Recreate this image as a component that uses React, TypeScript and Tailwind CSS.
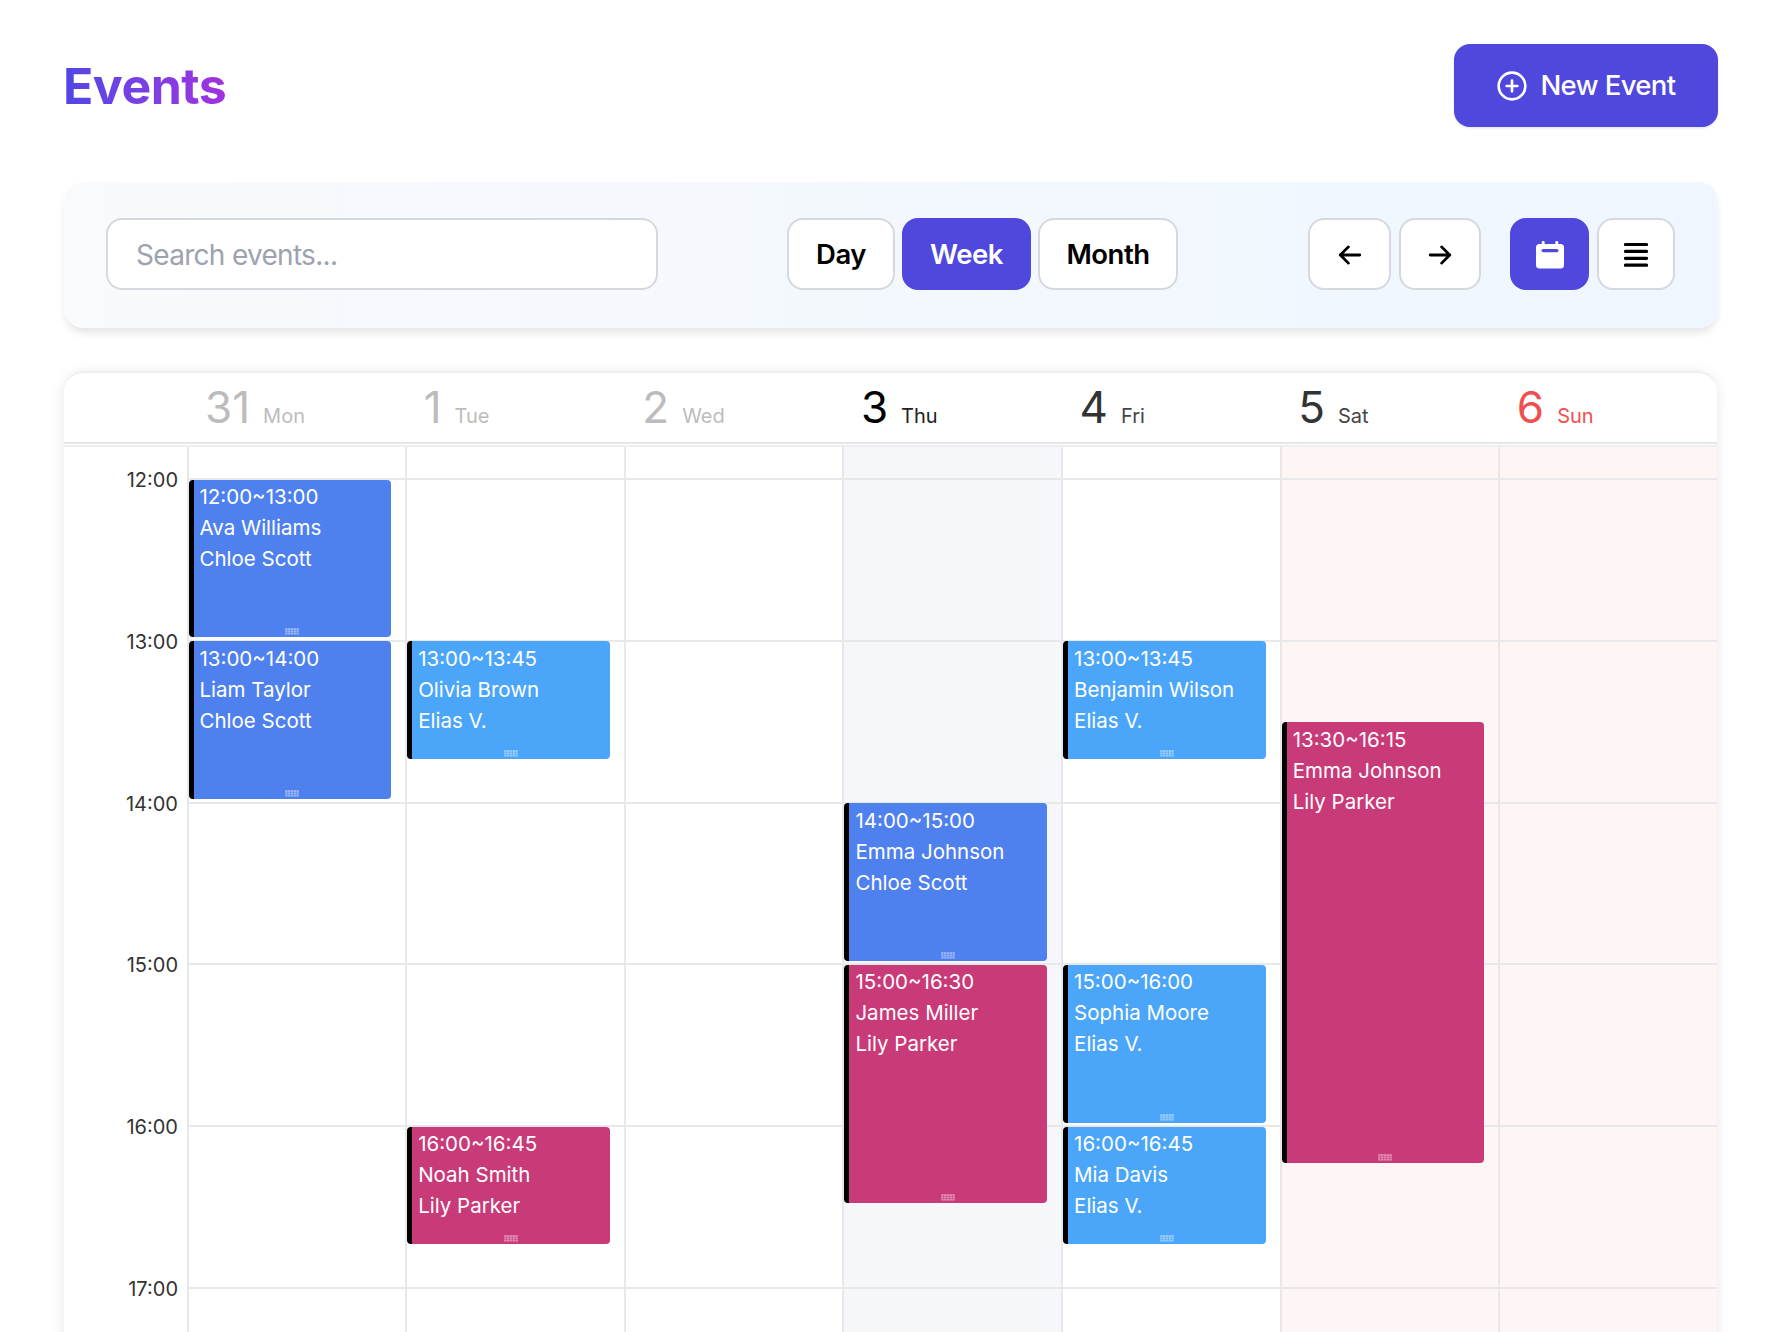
import { CirclePlus } from "lucide-react";

type EventItem = {
  col: number;
  start: number;
  end: number;
  time: string;
  name: string;
  owner: string;
  color: string;
};

const HOUR = 161.75;

const days = [
  { num: "31", label: "Mon", numClass: "text-[#bcbcbc]", labelClass: "text-[#bcbcbc]", bg: "" },
  { num: "1", label: "Tue", numClass: "text-[#bcbcbc]", labelClass: "text-[#bcbcbc]", bg: "" },
  { num: "2", label: "Wed", numClass: "text-[#bcbcbc]", labelClass: "text-[#bcbcbc]", bg: "" },
  { num: "3", label: "Thu", numClass: "text-black", labelClass: "text-[#222222]", bg: "bg-[#f5f7fb]" },
  { num: "4", label: "Fri", numClass: "text-[#333333]", labelClass: "text-[#444444]", bg: "" },
  { num: "5", label: "Sat", numClass: "text-[#333333]", labelClass: "text-[#444444]", bg: "bg-[#fef5f5]" },
  { num: "6", label: "Sun", numClass: "text-[#ef4f4f]", labelClass: "text-[#ef4f4f]", bg: "bg-[#fef5f5]" },
];

const hours = ["12:00", "13:00", "14:00", "15:00", "16:00", "17:00"];

const BLUE = "bg-[#4f81ee]";
const SKY = "bg-[#4ba6f9]";
const PINK = "bg-[#c93a78]";

const events: EventItem[] = [
  { col: 0, start: 12, end: 13, time: "12:00~13:00", name: "Ava Williams", owner: "Chloe Scott", color: BLUE },
  { col: 0, start: 13, end: 14, time: "13:00~14:00", name: "Liam Taylor", owner: "Chloe Scott", color: BLUE },
  { col: 1, start: 13, end: 13.75, time: "13:00~13:45", name: "Olivia Brown", owner: "Elias V.", color: SKY },
  { col: 1, start: 16, end: 16.75, time: "16:00~16:45", name: "Noah Smith", owner: "Lily Parker", color: PINK },
  { col: 3, start: 14, end: 15, time: "14:00~15:00", name: "Emma Johnson", owner: "Chloe Scott", color: BLUE },
  { col: 3, start: 15, end: 16.5, time: "15:00~16:30", name: "James Miller", owner: "Lily Parker", color: PINK },
  { col: 4, start: 13, end: 13.75, time: "13:00~13:45", name: "Benjamin Wilson", owner: "Elias V.", color: SKY },
  { col: 4, start: 15, end: 16, time: "15:00~16:00", name: "Sophia Moore", owner: "Elias V.", color: SKY },
  { col: 4, start: 16, end: 16.75, time: "16:00~16:45", name: "Mia Davis", owner: "Elias V.", color: SKY },
  { col: 5, start: 13.5, end: 16.25, time: "13:30~16:15", name: "Emma Johnson", owner: "Lily Parker", color: PINK },
];

function ResizeHandle() {
  return (
    <svg width="14" height="7" viewBox="0 0 14 7" className="absolute bottom-[2px] left-1/2 -translate-x-1/2">
      {[0, 1, 2].map((r) =>
        [0, 1, 2, 3, 4].map((c) => (
          <rect key={`${r}-${c}`} x={c * 2.8 + 0.2} y={r * 2.3 + 0.1} width="2.4" height="1.9" fill="#ffffff" fillOpacity="0.42" />
        ))
      )}
    </svg>
  );
}

function EventCard({ ev }: { ev: EventItem }) {
  return (
    <div
      className={`absolute left-0 w-[202.5px] rounded-[4px] border-l-[5px] border-black pl-[6px] pt-[1.5px] text-[20.5px] leading-[31px] text-white ${ev.color}`}
      style={{ top: 32.5 + (ev.start - 12) * HOUR, height: (ev.end - ev.start) * HOUR - 4 }}
    >
      <div>{ev.time}</div>
      <div>{ev.name}</div>
      <div>{ev.owner}</div>
      <ResizeHandle />
    </div>
  );
}

function ToolButton({ active, className, children }: { active?: boolean; className: string; children: React.ReactNode }) {
  return (
    <button
      className={`flex h-[72px] items-center justify-center rounded-[16px] border-2 pt-[2px] text-[27.5px] font-semibold tracking-[-0.5px] ${
        active ? "border-[#5047dd] bg-[#5047dd] text-white" : "border-[#d5d8de] bg-white text-black"
      } ${className}`}
    >
      {children}
    </button>
  );
}

export default function App() {
  return (
    <div className="h-[1332px] overflow-hidden bg-white pl-[64px] pr-[52px] pt-[44px] font-['Inter',sans-serif]">
      <div className="flex h-[83px] items-center justify-between">
        <h1 className="-ml-[1px] bg-linear-to-r from-[#4f46e5] to-[#a030e0] bg-clip-text text-[50px] font-bold leading-none tracking-[-0.5px] text-transparent">
          Events
        </h1>
        <button className="flex h-[83px] w-[264px] items-center justify-center gap-[12px] rounded-[16px] bg-[#5047dd] text-[27.5px] font-medium tracking-[-0.6px] text-white shadow-sm">
          <CirclePlus size={32} strokeWidth={2} />
          New Event
        </button>
      </div>

      <div className="mt-[55px] flex h-[146px] items-center rounded-[20px] bg-linear-to-r from-[#f8fafc] to-[#eff6ff] pb-[2px] pl-[42px] pr-[43px] shadow-[0_6px_10px_-2px_rgba(0,0,0,0.12)]">
        <input
          placeholder="Search events..."
          className="h-[72px] w-[552px] rounded-[16px] border-2 border-[#d5d8de] bg-white px-[28px] pt-[2px] text-[28px] tracking-[-0.7px] outline-none placeholder:text-[#9ca3af]"
        />
        <div className="ml-[129px] flex gap-[7px]">
          <ToolButton className="w-[108px]">Day</ToolButton>
          <ToolButton active className="w-[129px]">Week</ToolButton>
          <ToolButton className="w-[140px]">Month</ToolButton>
        </div>
        <div className="ml-[130px] flex gap-[8px]">
          <ToolButton className="w-[83px]">
            <svg width="26" height="26" viewBox="0 0 24 24" fill="none" stroke="currentColor" strokeWidth="2.6" strokeLinecap="round" strokeLinejoin="round">
              <path d="M10.5 19.5 3 12l7.5-7.5M3 12h18" />
            </svg>
          </ToolButton>
          <ToolButton className="w-[82px]">
            <svg width="26" height="26" viewBox="0 0 24 24" fill="none" stroke="currentColor" strokeWidth="2.6" strokeLinecap="round" strokeLinejoin="round">
              <path d="M13.5 4.5 21 12l-7.5 7.5M21 12H3" />
            </svg>
          </ToolButton>
        </div>
        <div className="ml-[29px] flex gap-[8px]">
          <ToolButton active className="w-[79px]">
            <svg width="28" height="28" viewBox="0 0 28 28">
              <rect x="0" y="3" width="28" height="24.5" rx="3.5" fill="#ffffff" />
              <rect x="5.8" y="0" width="2.8" height="6" rx="1.2" fill="#ffffff" />
              <rect x="19.4" y="0" width="2.8" height="6" rx="1.2" fill="#ffffff" />
              <rect x="5.5" y="8" width="17" height="3.2" rx="1.6" fill="#5047dd" />
            </svg>
          </ToolButton>
          <ToolButton className="w-[78px]">
            <svg width="24" height="26" viewBox="0 0 24 26" fill="none" stroke="#000000" strokeWidth="3.2" strokeLinecap="round">
              <path d="M1.5 2.5h21M1.5 9.4h21M1.5 16.3h21M1.5 23.2h21" />
            </svg>
          </ToolButton>
        </div>
      </div>

      <div className="mr-[1px] mt-[43px] h-[1000px] overflow-hidden rounded-t-[20px] border-t-2 border-[#eeeef0] bg-white shadow-[0_2px_14px_rgba(0,0,0,0.10)]">
        <div className="grid h-[71px] grid-cols-[122.5px_repeat(7,1fr)] border-b-2 border-[#e5e6e8]">
          <div />
          {days.map((d) => (
            <div key={d.label} className="flex items-baseline gap-[13px] pl-[18.5px] pt-[5px]">
              <span className={`text-[44px] leading-[58px] ${d.numClass}`}>{d.num}</span>
              <span className={`text-[20px] leading-none ${d.labelClass}`}>{d.label}</span>
            </div>
          ))}
        </div>
        <div className="mt-[1px] grid grid-cols-[122.5px_repeat(7,1fr)] border-t-2 border-[#eeeef0]">
          <div className="pt-[19px]">
            {hours.map((h) => (
              <div key={h} className="flex h-[161.75px] justify-end pr-[8.5px] text-[20px] leading-[28px] text-[#333333]">
                {h}
              </div>
            ))}
          </div>
          {days.map((d, i) => (
            <div key={d.label} className={`relative h-[900px] border-l-2 border-[#e8e8ea] ${d.bg}`}>
              <div className="h-[31px]" />
              {hours.map((h) => (
                <div key={h} className="h-[161.75px] border-t-2 border-[#e8e8ea]" />
              ))}
              {events
                .filter((ev) => ev.col === i)
                .map((ev) => (
                  <EventCard key={ev.time + ev.name} ev={ev} />
                ))}
            </div>
          ))}
        </div>
      </div>
    </div>
  );
}
